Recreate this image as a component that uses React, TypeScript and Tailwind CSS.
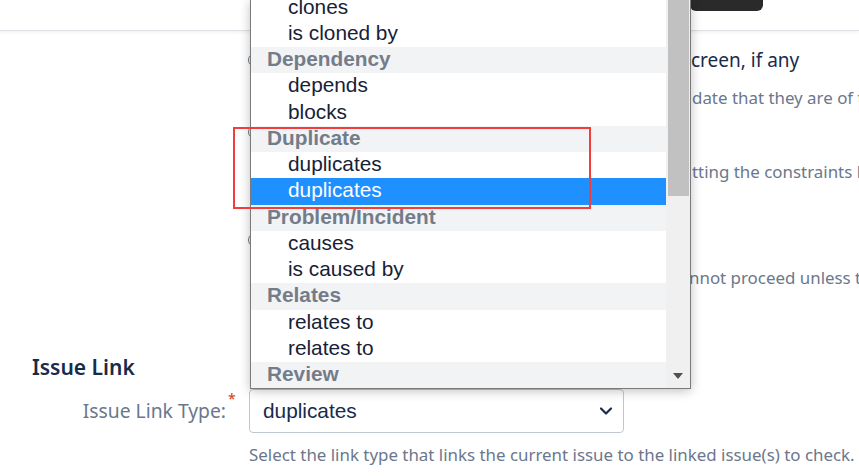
import React from "react";

const seg = { fontFamily: '"Noto Sans", "Open Sans", sans-serif' };
const arial = { fontFamily: '"Liberation Sans", Arial, sans-serif' };

type Row = { t: string; h?: boolean; sel?: boolean };
const rows: Row[] = [
  { t: "clones" },
  { t: "is cloned by" },
  { t: "Dependency", h: true },
  { t: "depends" },
  { t: "blocks" },
  { t: "Duplicate", h: true },
  { t: "duplicates" },
  { t: "duplicates", sel: true },
  { t: "Problem/Incident", h: true },
  { t: "causes" },
  { t: "is caused by" },
  { t: "Relates", h: true },
  { t: "relates to" },
  { t: "relates to" },
  { t: "Review", h: true },
];

function Radio() {
  return <span className="inline-block w-[14px] h-[14px] rounded-full border border-[#6b778c] bg-white shrink-0" />;
}

export default function App() {
  return (
    <div className="relative w-[859px] h-[476px] overflow-hidden bg-white" style={seg}>
      {/* header */}
      <div className="relative h-[31px] border-b border-[#dfe1e6] shadow-[0_1px_3px_rgba(9,30,66,0.08)]">
        <div className="absolute left-[690px] top-0 w-[73px] h-[11px] bg-[#2a2a2a] rounded-b-[6px]" />
      </div>

      {/* radio group */}
      <div className="pl-[248px]">
        <div className="mt-[17px] flex items-center h-[24px]">
          <Radio />
          <div className="ml-[8px] flex whitespace-nowrap text-[19px] text-[#172b4d] leading-[24px]">
            <span className="inline-block shrink-0 w-[421px] overflow-hidden">Validate linked issues on the transition s</span>
            <span className="shrink-0">creen, if any</span>
          </div>
        </div>
        <div className="mt-[15px] h-[22px] pl-[22px] flex whitespace-nowrap text-[16.9px] text-[#6b778c] leading-[22px]">
          <span className="inline-block shrink-0 w-[422px] overflow-hidden">Checks linked issues on the transition screen and vali</span>
          <span className="shrink-0">date that they are of the required types</span>
        </div>

        <div className="mt-[11px] flex items-center h-[24px]">
          <Radio />
          <div className="ml-[8px] w-[400px] overflow-hidden whitespace-nowrap text-[19px] text-[#172b4d] leading-[24px]">
            Validate existing linked issues
          </div>
        </div>
        <div className="mt-[17px] h-[22px] pl-[22px] flex whitespace-nowrap text-[16.9px] text-[#6b778c] leading-[22px]">
          <span className="inline-block shrink-0 w-[422px] overflow-hidden">Checks the issues already linked to the issue, respe</span>
          <span className="shrink-0">tting the constraints below</span>
        </div>

        <div className="mt-[45px] flex items-center h-[24px]">
          <Radio />
          <div className="ml-[8px] w-[400px] overflow-hidden whitespace-nowrap text-[19px] text-[#172b4d] leading-[24px]">
            Require linked issues
          </div>
        </div>
        <div className="mt-[15px] h-[22px] pl-[22px] flex whitespace-nowrap text-[16.9px] text-[#6b778c] leading-[22px]">
          <span className="inline-block shrink-0 w-[419px] overflow-hidden">The transition is blocked and the user ca</span>
          <span className="shrink-0">nnot proceed unless the issue has links</span>
        </div>
      </div>

      {/* Issue Link section */}
      <div className="mt-[64px] pl-[32px] h-[28px] text-[21px] font-semibold text-[#172b4d] leading-[28px]">
        Issue Link
      </div>
      <div className="mt-[8px] flex items-center">
        <div className="w-[226px] shrink-0 text-right text-[19.3px] text-[#6b778c] leading-[24px] whitespace-nowrap">
          Issue Link Type:
        </div>
        <div className="self-start w-[23px] shrink-0 pl-[2px] mt-[3px] text-[14px] text-[#de350b] leading-[14px]">*</div>
        <div className="w-[375px] h-[44px] border border-[#c1c7d0] rounded-[4px] flex items-center justify-between pl-[13px] pr-[9px] bg-white">
          <span className="text-[20.8px] text-[#172b4d]" style={arial}>duplicates</span>
          <svg width="14" height="10" viewBox="0 0 14 10" className="mr-[1px]">
            <path d="M2 2.5 L7 7.5 L12 2.5" fill="none" stroke="#172b4d" strokeWidth="2.2" strokeLinecap="round" strokeLinejoin="round" />
          </svg>
        </div>
      </div>
      <div className="mt-[11px] pl-[249px] text-[16.9px] text-[#6b778c] leading-[22px] whitespace-nowrap">
        Select the link type that links the current issue to the linked issue(s) to check.
      </div>

      {/* open dropdown list */}
      <div
        className="absolute left-[250px] top-0 w-[441px] h-[389px] bg-white border border-[#7a7a7a] border-t-0 overflow-hidden flex shadow-[0_2px_10px_rgba(0,0,0,0.25)]"
        style={arial}
      >
        <div className="flex-1 overflow-hidden">
          <div className="mt-[-5.5px]">
            {rows.map((r, i) => (
              <div
                key={i}
                className={
                  r.h
                    ? "h-[26.25px] leading-[24.5px] pl-[16px] bg-[#f2f3f5] text-[#747c8a] font-bold text-[20.8px] whitespace-nowrap"
                    : r.sel
                    ? "h-[26.25px] leading-[24.5px] pl-[37px] bg-[#1e90ff] text-white text-[20.8px] whitespace-nowrap"
                    : "h-[26.25px] leading-[24.5px] pl-[37px] text-[#172136] text-[20.8px] whitespace-nowrap"
                }
              >
                {r.t}
              </div>
            ))}
          </div>
        </div>
        <div className="relative w-[24px] bg-[#f0f0f0]">
          <div className="absolute left-[2px] top-0 w-[21px] h-[196px] bg-[#c1c1c1]" />
          <svg width="10" height="6" viewBox="0 0 10 6" className="absolute left-[7px] bottom-[9px]">
            <path d="M0 0 L10 0 L5 6 Z" fill="#505050" />
          </svg>
        </div>
      </div>

      {/* annotation */}
      <div className="absolute left-[233px] top-[127px] w-[358px] h-[82px] border-2 border-[#f23d3d]" />
    </div>
  );
}
